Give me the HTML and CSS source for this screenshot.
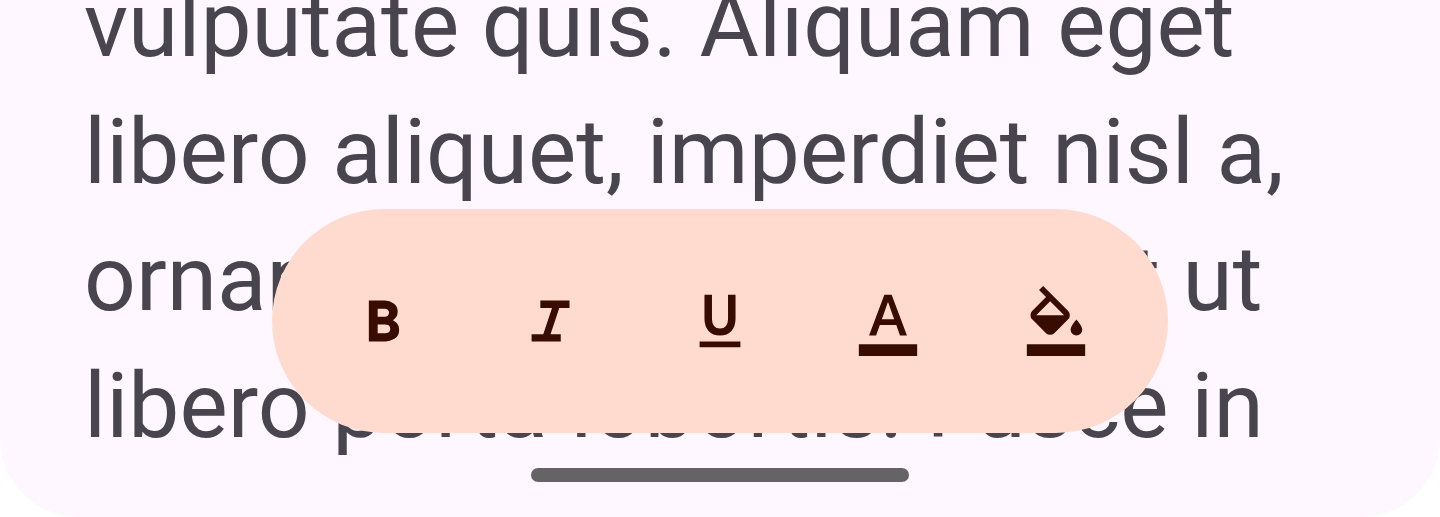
FILE: index.html
```html
<!DOCTYPE html>
<html lang="la">
<head>
<meta charset="utf-8">
<title>Editor</title>
<link rel="stylesheet" href="styles.css">
</head>
<body>
<main class="screen">
  <p class="document">vulputate quis. Aliquam eget<br>libero aliquet, imperdiet nisl a,<br>ornare varius libero. Sed et ut<br>libero porta lobortis. Fusce in</p>
  <div class="toolbar" role="toolbar">
    <button class="tool" aria-label="Bold"><svg class="icon" viewBox="0 -960 960 960"><path d="M272-200v-560h221q65 0 120 40t55 111q0 51-23 78.500T602-491q25 11 55.500 41t30.500 90q0 89-65 124.500T501-200H272Zm121-112h104q48 0 58.500-24.500T566-372q0-11-10.500-35.500T494-432H393v120Zm0-228h93q33 0 48-17t15-38q0-24-17-39t-44-15h-95v109Z"/></svg></button>
    <button class="tool" aria-label="Italic"><svg class="icon" viewBox="0 -960 960 960"><path d="M200-200v-100h160l120-360H320v-100h400v100H580L460-300h140v100H200Z"/></svg></button>
    <button class="tool" aria-label="Underline"><svg class="icon" viewBox="0 -960 960 960"><path d="M200-120v-80h560v80H200Zm280-160q-101 0-157-63t-56-167v-330h103v336q0 56 28 91t82 35q54 0 82-35t28-91v-336h103v330q0 104-56 167t-157 63Z"/></svg></button>
    <button class="tool" aria-label="Text color"><svg class="icon" viewBox="0 -960 960 960"><path d="M80 0v-160h800V0H80Zm140-280 210-560h100l210 560h-96l-50-144H368l-52 144h-96Zm176-224h168l-82-232h-4l-82 232Z"/></svg></button>
    <button class="tool" aria-label="Fill color"><svg class="icon" viewBox="0 -960 960 960"><path d="m247-904 57-56 343 343q23 23 23 57t-23 57L457-313q-23 23-57 23t-57-23L153-503q-23-23-23-57t23-57l190-191-96-96Zm153 153L209-560h382L400-751Zm360 471q-33 0-56.500-23.500T680-360q0-21 12.500-45t27.500-45q9-12 19-25t21-25q11 12 21 25t19 25q15 21 27.500 45t12.500 45q0 33-23.500 56.500T760-280ZM80 0v-160h800V0H80Z"/></svg></button>
  </div>
  <div class="home-indicator"></div>
</main>
</body>
</html>
```
FILE: styles.css
```css
body {
  margin: 0;
  background: #fff;
}

.screen {
  position: relative;
  height: 517px;
  overflow: hidden;
  border-radius: 0 0 79px 79px;
  background: #fef7ff;
}

.document {
  margin: -38px 0 0 84px;
  font: 400 91px/127px Roboto, sans-serif;
  letter-spacing: 0.03px;
  color: #49454f;
  white-space: nowrap;
}

.toolbar {
  position: absolute;
  top: 209px;
  left: 272px;
  display: flex;
  align-items: center;
  box-sizing: border-box;
  width: 896px;
  height: 224px;
  padding: 0 28px;
  border-radius: 112px;
  background: #ffdbcf;
}

.tool {
  display: flex;
  flex: 1;
  align-items: center;
  justify-content: center;
  height: 168px;
  padding: 0;
  border: 0;
  background: none;
}

.icon {
  display: block;
  width: 70px;
  height: 70px;
  fill: #390c00;
}

.home-indicator {
  position: absolute;
  top: 468px;
  left: 531px;
  width: 378px;
  height: 14px;
  border-radius: 7px;
  background: #666367;
}
```
